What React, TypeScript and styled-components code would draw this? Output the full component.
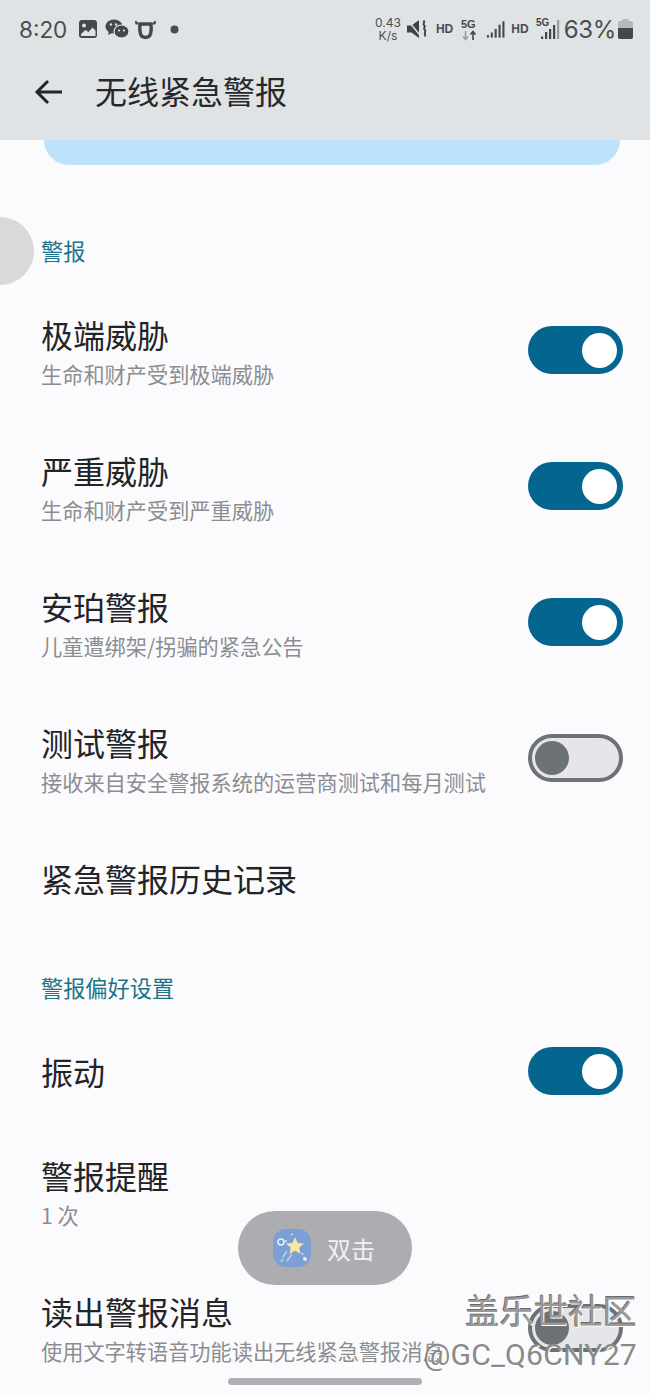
import { createGlobalStyle } from "styled-components";
import styled from "styled-components";

const GlobalStyle = createGlobalStyle`
  html, body {
    margin: 0;
    padding: 0;
    background: #fbfbfe;
  }
  body {
    font-family: "Noto Sans CJK SC", "Noto Sans", sans-serif;
  }
`;

const Page = styled.div`
  position: relative;
  width: 650px;
  height: 1394px;
  overflow: hidden;
  background: #fbfbfe;
`;

const Header = styled.header`
  height: 140px;
  background: #e0e3e5;
  display: flex;
  flex-direction: column;
`;

const StatusBar = styled.div`
  height: 58px;
  display: flex;
  align-items: center;
  justify-content: space-between;
  padding: 0 17px 0 19px;
  color: #4a4d4f;
`;

const StatusGroup = styled.div`
  display: flex;
  align-items: center;
`;

const Time = styled.span`
  font-family: Inter, Roboto, sans-serif;
  font-size: 22.5px;
  margin-right: 12px;
`;

const Speed = styled.span`
  font-family: Inter, Roboto, sans-serif;
  font-size: 12px;
  line-height: 13px;
  text-align: center;
  width: 28px;
  margin-right: 5px;
`;

const Tiny = styled.span<{ $mr: number }>`
  font-family: "Liberation Sans", sans-serif;
  font-weight: 700;
  font-size: 12px;
  margin-right: ${(p) => p.$mr}px;
`;

const Percent = styled.span`
  font-family: Inter, Roboto, sans-serif;
  font-size: 24px;
  letter-spacing: -0.3px;
  margin: 0 2px 0 4px;
`;

const Toolbar = styled.div`
  flex: 1;
  display: flex;
  align-items: center;
  padding: 0 0 14px 34px;
`;

const PageTitle = styled.h1`
  margin: 0 0 4px 33px;
  font-size: 32px;
  line-height: 44px;
  font-weight: 400;
  color: #26282a;
`;

const Banner = styled.div`
  height: 25px;
  margin: 0 30px 0 44px;
  background: #bde3fb;
  border-radius: 0 0 36px 36px;
`;

const SectionLabel = styled.div<{ $height: number; $pb: number }>`
  height: ${(p) => p.$height}px;
  padding: 0 0 ${(p) => p.$pb}px 41px;
  box-sizing: border-box;
  display: flex;
  align-items: flex-end;
  font-size: 22.2px;
  line-height: 30px;
  color: #1c7387;
`;

const Row = styled.div<{ $height: number }>`
  height: ${(p) => p.$height}px;
  display: flex;
  align-items: center;
  justify-content: space-between;
  padding: 0 27px 0 41px;
`;

const RowText = styled.div<{ $lift?: number }>`
  display: flex;
  flex-direction: column;
  padding-top: 3px;
  margin-bottom: ${(p) => p.$lift ?? 0}px;
`;

const RowTitle = styled.div`
  font-size: 32px;
  line-height: 42px;
  color: #222426;
`;

const RowSub = styled.div`
  margin-top: 3px;
  font-size: 21.2px;
  line-height: 32px;
  color: #8c8d90;
  white-space: nowrap;
`;

const Track = styled.div<{ $on: boolean }>`
  flex: none;
  width: 95px;
  height: 48px;
  box-sizing: border-box;
  border-radius: 24px;
  display: flex;
  align-items: center;
  justify-content: ${(p) => (p.$on ? "flex-end" : "flex-start")};
  background: ${(p) => (p.$on ? "#04668f" : "#e6e6ea")};
  border: ${(p) => (p.$on ? "none" : "4px solid #6d7276")};
  padding: 0 ${(p) => (p.$on ? 6 : 3)}px;
`;

const Knob = styled.div<{ $on: boolean }>`
  width: ${(p) => (p.$on ? 35 : 34)}px;
  height: ${(p) => (p.$on ? 35 : 34)}px;
  border-radius: 50%;
  background: ${(p) => (p.$on ? "#ffffff" : "#6d7276")};
`;

const SideHandle = styled.div`
  position: absolute;
  left: -34px;
  top: 217px;
  width: 68px;
  height: 68px;
  border-radius: 50%;
  background: #d9d9d9;
`;

const Pill = styled.div`
  position: absolute;
  left: 238px;
  top: 1211px;
  width: 174px;
  height: 74px;
  border-radius: 37px;
  background: #adacb0;
  display: flex;
  align-items: center;
  padding-left: 34px;
  box-sizing: border-box;
  gap: 15px;
  color: #f1f1f3;
  font-size: 24px;
`;

const WatermarkTitle = styled.div`
  position: absolute;
  right: 13px;
  top: 1286px;
  font-size: 34.4px;
  line-height: 46px;
  color: #989898;
  text-shadow: 1px 1px 0 #ffffff, -0.6px -0.6px 0 #6a6a6a;
`;

const WatermarkUser = styled.div`
  position: absolute;
  right: 13px;
  top: 1335px;
  font-family: Roboto, "Noto Sans", sans-serif;
  font-size: 30.2px;
  line-height: 40px;
  letter-spacing: 0.2px;
  color: #8a8a8a;
  text-shadow: 1px 1px 0 #ffffff;
`;

const HomeBar = styled.div`
  position: absolute;
  left: 228px;
  top: 1378px;
  width: 194px;
  height: 7px;
  border-radius: 4px;
  background: #b0afb4;
`;

const threats = [
  { title: "极端威胁", sub: "生命和财产受到极端威胁", on: true },
  { title: "严重威胁", sub: "生命和财产受到严重威胁", on: true },
  { title: "安珀警报", sub: "儿童遭绑架/拐骗的紧急公告", on: true },
  { title: "测试警报", sub: "接收来自安全警报系统的运营商测试和每月测试", on: false },
];

function Toggle({ on }: { on: boolean }) {
  return (
    <Track $on={on}>
      <Knob $on={on} />
    </Track>
  );
}

function Signal({ w }: { w: number }) {
  return (
    <svg width={w} height="22" viewBox="0 0 22 22" fill="#45484a">
      <rect x="1" y="18" width="2.4" height="3" />
      <rect x="5.5" y="15" width="2.4" height="6" />
      <rect x="10" y="11" width="2.4" height="10" />
      <rect x="14.5" y="6" width="2.4" height="15" />
      <rect x="19" y="2" width="2.4" height="19" />
    </svg>
  );
}

export default function App() {
  return (
    <Page>
      <GlobalStyle />
      <Header>
        <StatusBar>
          <StatusGroup>
            <Time>8:20</Time>
            <svg width="18" height="18" viewBox="0 0 18 18" style={{ marginRight: 8 }}>
              <rect width="18" height="18" rx="3" fill="#45484a" />
              <circle cx="5" cy="5.500" r="2" fill="#e0e3e5" />
              <path d="M2 14l4.500-4 3 2 4-4.500 3 3V16H2z" fill="#e0e3e5" />
            </svg>
            <svg width="24" height="20" viewBox="0 0 24 20" fill="#45484a" style={{ marginRight: 6 }}>
              <ellipse cx="9" cy="7.500" rx="8.500" ry="7" />
              <path d="M4 12l-1 4 5-2.500z" />
              <ellipse cx="16.500" cy="12.500" rx="7.500" ry="6.500" stroke="#e0e3e5" strokeWidth="1.200" />
              <circle cx="6" cy="5.500" r="1.200" fill="#e0e3e5" />
              <circle cx="11" cy="5.500" r="1.200" fill="#e0e3e5" />
              <circle cx="14" cy="11.500" r="1.100" fill="#e0e3e5" />
              <circle cx="19" cy="11.500" r="1.100" fill="#e0e3e5" />
            </svg>
            <svg width="21" height="21" viewBox="0 0 21 21" fill="none" style={{ marginRight: 14 }}>
              <path
                d="M5 5h11c.4 3.500.4 7-.5 10-.7 2-2.300 3.500-5 3.500s-4.300-1.500-5-3.500C4.600 12 4.600 8.500 5 5z"
                stroke="#45484a"
                strokeWidth="3.400"
              />
              <path d="M3.500 4.500H1.500L.6 2M17.500 4.500h2l.9-2.500" stroke="#45484a" strokeWidth="2.200" />
            </svg>
            <svg width="9" height="9" viewBox="0 0 9 9">
              <circle cx="4.500" cy="4.500" r="4" fill="#4a4d4f" />
            </svg>
          </StatusGroup>
          <StatusGroup>
            <Speed>
              0.43
              <br />
              K/s
            </Speed>
            <svg width="21" height="20" viewBox="0 0 21 20" fill="#3f4244" style={{ marginRight: 8 }}>
              <path d="M0 6.500h4.500L12 1v18l-7.500-5.500H0z" />
              <path d="M1 1.500l13 16" stroke="#e0e3e5" strokeWidth="1.400" />
              <path
                d="M16.500 1.500c2.500 2-1.500 3 .7 4.700s-1.700 2.800.5 4.600-1.700 3 .8 6.700"
                fill="none"
                stroke="#3f4244"
                strokeWidth="2"
              />
            </svg>
            <Tiny $mr={8}>HD</Tiny>
            <svg width="17" height="23" viewBox="0 0 17 23" style={{ marginRight: 8 }}>
              <text x="0" y="10" fontFamily="Liberation Sans" fontWeight="700" fontSize="11" fill="#45484a">
                5G
              </text>
              <path d="M4.500 13v8M2 18.500l2.500 3 2.500-3" stroke="#9a9c9e" strokeWidth="1.600" fill="none" />
              <path d="M12 22v-8M9.500 16.500l2.500-3 2.500 3" stroke="#45484a" strokeWidth="1.600" fill="none" />
            </svg>
            <span style={{ display: "inline-flex", marginRight: 6 }}>
              <Signal w={19} />
            </span>
            <Tiny $mr={7}>HD</Tiny>
            <svg width="24" height="24" viewBox="0 0 24 24" fill="#45484a">
              <text x="0" y="9" fontFamily="Liberation Sans" fontWeight="700" fontSize="10">
                5G
              </text>
              <rect x="5" y="19.500" width="2.200" height="2.500" />
              <rect x="9" y="15" width="2.200" height="7" />
              <rect x="13" y="12" width="2.200" height="10" />
              <rect x="17" y="8" width="2.200" height="14" />
              <rect x="21" y="3" width="2.200" height="19" opacity="0.45" />
            </svg>
            <Percent>63%</Percent>
            <svg width="15" height="20" viewBox="0 0 15 20">
              <rect x="4.500" y="0" width="6" height="3" fill="#b5b7b8" />
              <rect x="0" y="2" width="15" height="18" rx="2" fill="#b5b7b8" />
              <path d="M0 9h15v9a2 2 0 0 1-2 2H2a2 2 0 0 1-2-2z" fill="#45484a" />
            </svg>
          </StatusGroup>
        </StatusBar>
        <Toolbar>
          <svg width="28" height="26" viewBox="0 0 28 26" fill="none" stroke="#232527" strokeWidth="3">
            <path d="M28 13H3M14 2L3 13l11 11" />
          </svg>
          <PageTitle>无线紧急警报</PageTitle>
        </Toolbar>
      </Header>
      <Banner />
      <SectionLabel $height={117} $pb={17}>
        警报
      </SectionLabel>
      {threats.map((t) => (
        <Row key={t.title} $height={136}>
          <RowText>
            <RowTitle>{t.title}</RowTitle>
            <RowSub>{t.sub}</RowSub>
          </RowText>
          <Toggle on={t.on} />
        </Row>
      ))}
      <Row $height={104}>
        <RowTitle>紧急警报历史记录</RowTitle>
      </Row>
      <SectionLabel $height={87} $pb={15}>
        警报偏好设置
      </SectionLabel>
      <Row $height={108}>
        <RowTitle>振动</RowTitle>
        <Toggle on />
      </Row>
      <Row $height={136}>
        <RowText $lift={5}>
          <RowTitle>警报提醒</RowTitle>
          <RowSub>1 次</RowSub>
        </RowText>
      </Row>
      <Row $height={134}>
        <RowText $lift={2}>
          <RowTitle>读出警报消息</RowTitle>
          <RowSub>使用文字转语音功能读出无线紧急警报消息</RowSub>
        </RowText>
        <Toggle on={false} />
      </Row>

      <SideHandle />
      <Pill>
        <svg width="40" height="40" viewBox="0 0 40 40">
          <rect x="1" y="1" width="38" height="38" rx="13" fill="#7c9fd6" />
          <path
            d="M23 9l2.600 6 6.400.6-4.800 4.200 1.400 6.200-5.600-3.300-5.600 3.300 1.400-6.200L13.800 15.600l6.600-.6z"
            fill="#f7e6a6"
          />
          <circle cx="9" cy="14" r="3" fill="none" stroke="#eef2fa" strokeWidth="1.500" />
          <path d="M13 13h3M19 6l3 2M30 25l2 4" stroke="#dfe8f7" strokeWidth="1.500" strokeDasharray="2 2" />
          <circle cx="33" cy="31" r="2" fill="#dfe8f7" />
          <path d="M11 29l4-6M15 33l5-7M9 34l2-3" stroke="#b8cbea" strokeWidth="1.800" />
        </svg>
        双击
      </Pill>
      <WatermarkTitle>盖乐世社区</WatermarkTitle>
      <WatermarkUser>@GC_Q6CNY27</WatermarkUser>
      <HomeBar />
    </Page>
  );
}
